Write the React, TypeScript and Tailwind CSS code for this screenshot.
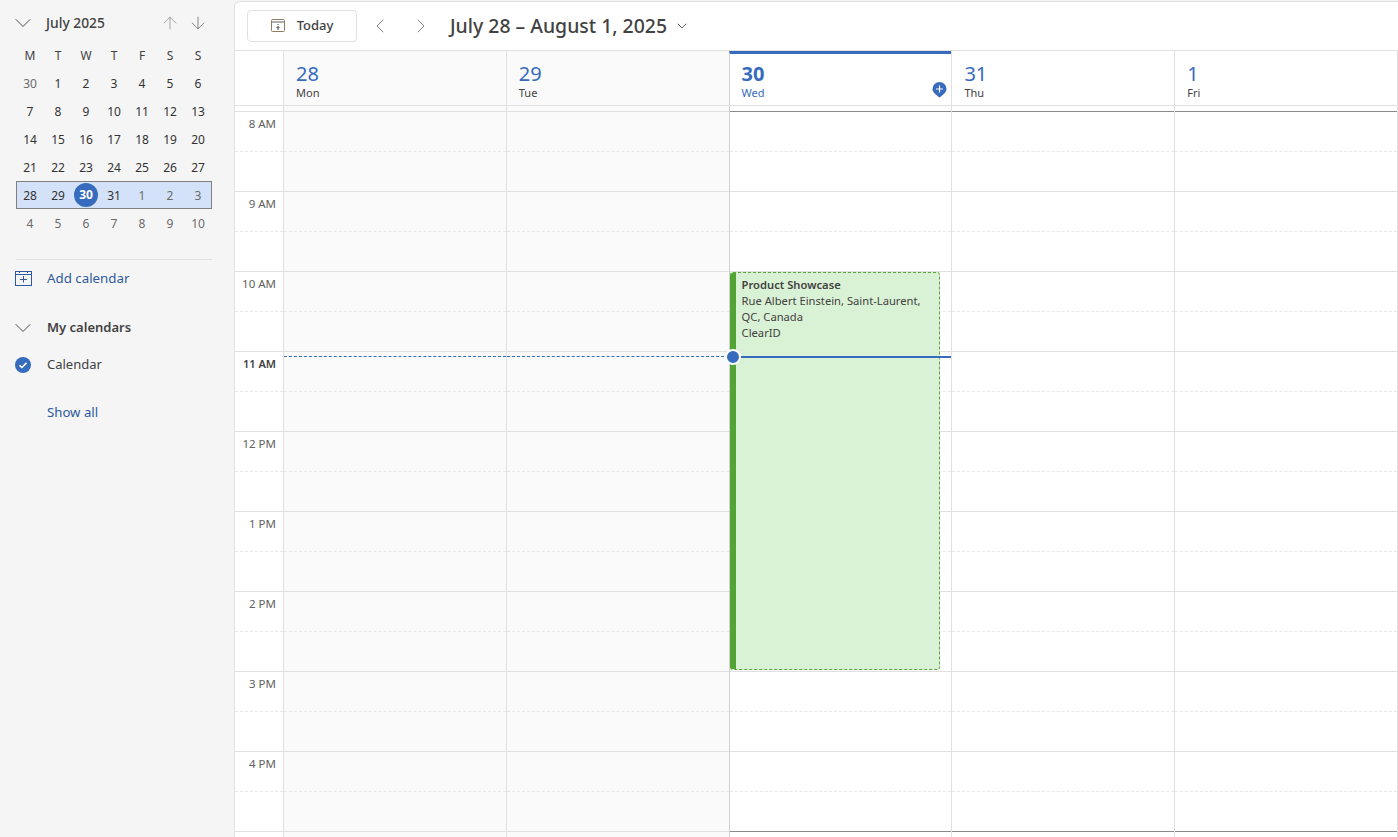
import React from 'react';
import { ArrowUp, ArrowDown, ChevronDown, ChevronLeft, ChevronRight } from 'lucide-react';

const font = "font-['Noto_Sans','Open_Sans',sans-serif]";

const weekDays = ['M', 'T', 'W', 'T', 'F', 'S', 'S'];
const weeks = [
  ['30', '1', '2', '3', '4', '5', '6'],
  ['7', '8', '9', '10', '11', '12', '13'],
  ['14', '15', '16', '17', '18', '19', '20'],
  ['21', '22', '23', '24', '25', '26', '27'],
  ['28', '29', '30', '31', '1', '2', '3'],
  ['4', '5', '6', '7', '8', '9', '10'],
];
// 5 PM only shows its top line, the rest is cut off by the window
const hours = ['8 AM', '9 AM', '10 AM', '11 AM', '12 PM', '1 PM', '2 PM', '3 PM', '4 PM', '5 PM'];
const days = [
  { num: '28', name: 'Mon', past: true },
  { num: '29', name: 'Tue', past: true },
  { num: '30', name: 'Wed', today: true },
  { num: '31', name: 'Thu' },
  { num: '1', name: 'Fri' },
];

function MiniCalendar() {
  return (
    <div className="w-[196px] ml-4">
      <div className="flex items-center h-7 mt-[9px]">
        <ChevronDown size={28} strokeWidth={0.8} className="text-[#424242] -ml-[7px] shrink-0" />
        <span className="ml-[9px] text-[13.8px] font-medium text-[#424242]">July 2025</span>
        <ArrowUp size={20} strokeWidth={0.9} className="ml-auto mr-2 text-[#8a8a8a]" />
        <ArrowDown size={20} strokeWidth={0.9} className="mr-1 text-[#616161]" />
      </div>
      <div className="grid grid-cols-7 h-7 mt-1 pt-0.5 items-center text-center text-xs text-[#424242]">
        {weekDays.map((d, i) => <span key={i}>{d}</span>)}
      </div>
      {weeks.map((week, w) => (
        <div
          key={w}
          className={`grid grid-cols-7 h-7 items-center text-center text-xs ${w === 4 ? 'bg-[#d3e2f8] outline outline-1 -outline-offset-1 outline-[#808080]' : ''}`}
        >
          {week.map((d, i) => {
            const muted = (w === 0 && i === 0) || w === 5 || (w === 4 && i > 3);
            if (w === 4 && i === 2) {
              return (
                <span key={i} className="mx-auto flex size-6 items-center justify-center rounded-full bg-[#366bbd] font-bold text-white">{d}</span>
              );
            }
            return <span key={i} className={`pt-0.5 ${muted ? 'text-[#6b6b6b]' : 'text-[#333333]'}`}>{d}</span>;
          })}
        </div>
      ))}
    </div>
  );
}

function Sidebar() {
  return (
    <aside className="w-[234px] shrink-0 bg-[#f5f5f5]">
      <MiniCalendar />
      <div className="mx-4 mt-[22px] w-[196px] border-t border-[#e0e0e0]" />
      <div className="flex items-center h-9 ml-[15px] mt-px">
        <svg width="17" height="16" viewBox="0 0 17 16" fill="none" stroke="#2f5a9e" strokeWidth="1">
          <rect x="0.5" y="0.5" width="16" height="14" />
          <path d="M0.5 3.500h16M4.500 0v2M12.500 0v2M8.500 5v6.500M5 8.500h7" />
        </svg>
        <span className="ml-[15px] text-[13.3px] text-[#2f5a9e]">Add calendar</span>
      </div>
      <div className="flex items-center h-9 ml-[9px] mt-[13px]">
        <ChevronDown size={28} strokeWidth={0.8} className="text-[#424242]" />
        <span className="ml-[10px] text-[13px] font-semibold text-[#424242]">My calendars</span>
      </div>
      <div className="flex items-center h-9 ml-[15px] mt-px">
        <svg width="16" height="16" viewBox="0 0 16 16">
          <circle cx="8" cy="8" r="8" fill="#366bbd" />
          <path d="M4.500 8.300l2.400 2.200 4.600-4.600" fill="none" stroke="#fff" strokeWidth="1.600" />
        </svg>
        <span className="ml-4 text-[13px] text-[#424242]">Calendar</span>
      </div>
      <div className="mt-3 ml-[47px] h-9 flex items-center text-[13.2px] text-[#2f5a9e]">Show all</div>
    </aside>
  );
}

function Toolbar() {
  return (
    <div className="flex h-[49px] items-center border-b border-[#e0e0e0] pl-3">
      <button className="flex h-8 w-[110px] items-center justify-center rounded border border-[#e0e0e0] bg-white text-[13px] font-medium text-[#424242]">
        <svg width="14" height="14" viewBox="0 0 14 14" fill="none" className="mr-3">
          <rect x="0.5" y="0.5" width="13" height="12" rx="1" stroke="#8f7a62" />
          <path d="M1 3h12" stroke="#616161" />
          <path d="M7 11V7.500M5.500 9L7 7.500 8.500 9M7 5v1" stroke="#424242" />
        </svg>
        Today
      </button>
      <ChevronLeft size={24} strokeWidth={0.9} className="ml-[11px] text-[#757575]" />
      <ChevronRight size={24} strokeWidth={0.9} className="ml-[17px] text-[#757575]" />
      <span className="ml-[17px] text-[19.4px] font-medium text-[#424242]">July 28 – August 1, 2025</span>
      <ChevronDown size={16} strokeWidth={1.5} className="ml-[7px] text-[#616161]" />
    </div>
  );
}

function DayHeader({ day }: { day: (typeof days)[number] }) {
  return (
    <div className={`relative min-w-0 border-l pl-3 ${day.today ? 'bg-white border-[#d1d1d1] border-t-[3px] border-t-[#366bbd] pt-2' : 'border-[#e0e0e0] pt-[11px]'} ${day.past ? 'bg-[#fafafa]' : ''}`}>
      <div className={`text-xl leading-[23px] text-[#366bbd] ${day.today ? 'font-bold' : ''}`}>{day.num}</div>
      <div className={`text-[11px] leading-4 ${day.today ? 'text-[#366bbd]' : 'text-[#424242]'}`}>{day.name}</div>
      {day.today && (
        <svg width="15" height="16" viewBox="0 0 14 16" className="absolute right-1 top-[28px]">
          <path d="M7 0a7 7 0 0 1 7 7c0 3-3 5.500-7 8.500C3 12.500 0 10 0 7a7 7 0 0 1 7-7z" fill="#366bbd" />
          <path d="M7 3.500v7M3.500 7h7" stroke="#fff" strokeWidth="1.200" />
        </svg>
      )}
    </div>
  );
}

function DayColumn({ day, index }: { day: (typeof days)[number]; index: number }) {
  return (
    <div className={`relative min-w-0 border-l ${day.today ? 'border-[#d1d1d1]' : 'border-[#e0e0e0]'} ${day.past ? 'bg-[#fafafa]' : 'bg-white'}`}>
      {hours.map((h, i) => (
        <div key={h} className={`h-20 border-t ${(i === 0 || i === 9) && !day.past ? 'border-t-[#8a8a8a]' : 'border-t-[#e0e0e0]'}`}>
          <div className="h-10 border-b border-dashed border-[#e8e8e8]" />
        </div>
      ))}
      {index < 2 && <div className="absolute inset-x-0 top-[245px] border-t border-dashed border-[#366bbd]" />}
      {day.today && (
        <>
          <div className="absolute left-0 right-[11px] top-[161px] h-[398px] overflow-hidden rounded-[3px] border border-l-0 border-dashed border-[#5aa63a] bg-[#d9f1d4] pl-3 pt-[4px] text-[11.2px] leading-4 text-[#424242]">
            <div className="absolute inset-y-0 left-0 w-1.5 bg-[#52a535]" />
            <div className="font-semibold">Product Showcase</div>
            <div>Rue Albert Einstein, Saint-Laurent, QC, Canada</div>
            <div>ClearID</div>
          </div>
          <div className="absolute inset-x-0 top-[245px] h-0.5 bg-[#366bbd]" />
          <div className="absolute -left-[5px] top-[238px] size-4 rounded-full border-2 border-white bg-[#366bbd]" />
        </>
      )}
    </div>
  );
}

export default function App() {
  return (
    <div className={`flex h-[837px] w-[1398px] overflow-hidden bg-[#f5f5f5] ${font}`}>
      <Sidebar />
      <main className="mt-px flex-1 min-w-0 overflow-hidden rounded-tl-md border-l border-t border-[#e0e0e0] bg-white">
        <Toolbar />
        <div className="grid h-[55px] grid-cols-[48px_repeat(5,1fr)] border-b border-r border-[#e0e0e0]">
          <div />
          {days.map(d => <DayHeader key={d.num} day={d} />)}
        </div>
        <div className="h-[5px] grid grid-cols-[48px_repeat(5,1fr)] border-r border-[#e0e0e0]">
          <div />
          {days.map(d => <div key={d.num} className={`border-l ${d.today ? 'border-[#d1d1d1]' : 'border-[#e0e0e0]'} ${d.past ? 'bg-[#fafafa]' : ''}`} />)}
        </div>
        <div className="grid grid-cols-[48px_repeat(5,1fr)] border-r border-[#e0e0e0]">
          <div>
            {hours.map(h => (
              <div key={h} className="h-20 border-t border-[#e0e0e0]">
                <div className="h-10 border-b border-dashed border-[#e8e8e8] pr-[7px] pt-1 text-right">
                  <span className={`block leading-4 ${h === '11 AM' ? 'text-[11px] font-semibold text-[#424242]' : 'text-[11.5px] text-[#616161]'}`}>{h === '5 PM' ? '' : h}</span>
                </div>
              </div>
            ))}
          </div>
          {days.map((d, i) => <DayColumn key={d.num} day={d} index={i} />)}
        </div>
      </main>
    </div>
  );
}
